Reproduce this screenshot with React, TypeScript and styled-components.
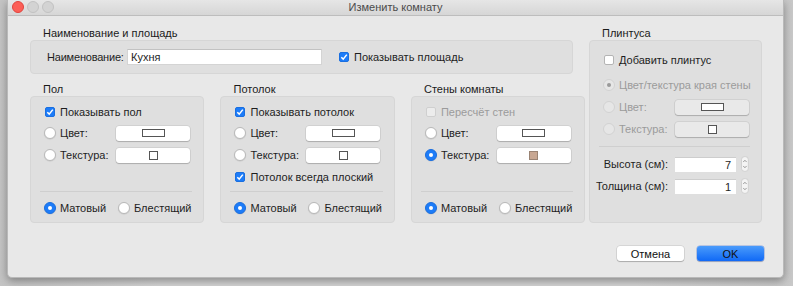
import React from 'react'
import styled, { createGlobalStyle, css } from 'styled-components'

const GlobalStyle = createGlobalStyle`
  html, body {
    margin: 0;
    padding: 0;
  }
  body {
    background: #cdcdcd;
    font-family: 'Liberation Sans', Arial, sans-serif;
    font-size: 11px;
    color: #1e1e1e;
  }
  * {
    box-sizing: border-box;
  }
`

const Blue = '#1d7cf8'

const Page = styled.div`
  width: 793px;
  height: 286px;
  padding-left: 7px;
  overflow: hidden;
  background: linear-gradient(to right, #c4c4c4, #d4d4d4 20%, #d4d4d4 80%, #c8c8c8);
`

const Window = styled.div`
  display: flex;
  flex-direction: column;
  width: 777px;
  height: 278px;
  background: #e8e8e8;
  border: 1px solid #b9b9b9;
  border-top: none;
  border-radius: 0 0 5px 5px;
  box-shadow: 0 3px 8px rgba(0, 0, 0, 0.35);
`

const TitleBar = styled.div`
  display: grid;
  grid-template-columns: 1fr auto 1fr;
  align-items: center;
  height: 16px;
  padding-bottom: 1px;
  background: linear-gradient(#e6e6e6, #d6d6d6);
  border-bottom: 1px solid #bdbdbd;
`

const Lights = styled.div`
  display: flex;
  gap: 3px;
  padding-left: 4px;
`

const Light = styled.span<{ $color?: string }>`
  width: 12px;
  height: 12px;
  border-radius: 50%;
  background: ${(p) => p.$color ?? '#d3d3d3'};
  border: 0.5px solid ${(p) => (p.$color ? '#e0443e' : '#c2c2c2')};
`

const WindowTitle = styled.div`
  color: #4b4b4b;
  font-size: 11px;
`

const Content = styled.div`
  display: grid;
  grid-template-columns: 543px 173px;
  column-gap: 16px;
  padding: 10px 0 0 22px;
`

const Column = styled.div`
  display: flex;
  flex-direction: column;
`

const Section = styled.section<{ $grow?: boolean }>`
  display: flex;
  flex-direction: column;
  ${(p) => p.$grow && 'flex: 1;'}
`

const SectionTitle = styled.div`
  height: 14px;
  line-height: 14px;
  padding-left: 13px;
  color: #1b1b1b;
`

const GroupBox = styled.div<{ $pad?: string }>`
  display: flex;
  flex-direction: column;
  flex: 1;
  gap: 6px;
  padding: ${(p) => p.$pad ?? '8px 12px 6px 13px'};
  background: #dfdfdf;
  border: 1px solid #d6d6d6;
  border-radius: 4px;
`

const NameBox = styled(GroupBox)`
  flex: none;
  flex-direction: row;
  align-items: center;
  gap: 0;
  height: 34px;
  padding: 0 16px;
`

const NameLabel = styled.span`
  width: 80px;
  flex: none;
  letter-spacing: -0.2px;
`

const TextInput = styled.input`
  width: 195px;
  height: 16px;
  padding: 0 3px;
  border: 1px solid #d4d4d4;
  border-top-color: #c2c2c2;
  background: #fff;
  font-family: inherit;
  font-size: 11px;
  color: #1e1e1e;
  outline: none;
`

const Walls = styled.div`
  display: grid;
  grid-template-columns: repeat(3, 1fr);
  column-gap: 16px;
  margin-top: 8px;
`

const Row = styled.div<{ $mt?: number; $h?: number }>`
  display: flex;
  align-items: center;
  height: ${(p) => p.$h ?? 16}px;
  flex: none;
  margin-top: ${(p) => p.$mt ?? 0}px;
`

const Choice = styled.label<{ $width?: number; $disabled?: boolean; $ml?: number }>`
  display: flex;
  align-items: center;
  gap: 4px;
  flex: none;
  white-space: nowrap;
  width: ${(p) => (p.$width ? `${p.$width}px` : 'auto')};
  margin-left: ${(p) => p.$ml ?? 0}px;
  color: ${(p) => (p.$disabled ? '#9b9b9b' : '#1e1e1e')};
`

const BoxMark = styled.span<{ $checked?: boolean; $disabled?: boolean }>`
  display: flex;
  align-items: center;
  justify-content: center;
  width: 10px;
  height: 10px;
  margin: 0 1px;
  border-radius: 2px;
  background: #fff;
  border: 1px solid #b4b4b4;
  ${(p) =>
    p.$checked &&
    css`
      background: ${Blue};
      border-color: #1a6fe0;
    `}
  ${(p) =>
    p.$disabled &&
    css`
      background: #ececec;
      border-color: #cfcfcf;
    `}
`

const RadioMark = styled.span<{ $checked?: boolean; $disabled?: boolean }>`
  display: flex;
  align-items: center;
  justify-content: center;
  width: 12px;
  height: 12px;
  border-radius: 50%;
  background: #fff;
  border: 1px solid #b9b9b9;
  box-shadow: 0 0.5px 1px rgba(0, 0, 0, 0.12);
  ${(p) =>
    p.$checked &&
    css`
      background: ${Blue};
      border-color: #1a6fe0;
      &::after {
        content: '';
        width: 4px;
        height: 4px;
        border-radius: 50%;
        background: #fff;
      }
    `}
  ${(p) =>
    p.$disabled &&
    css`
      background: #e6e6e6;
      border-color: #d2d2d2;
      box-shadow: none;
      &::after {
        background: #9a9a9a;
      }
    `}
`

const Check = () => (
  <svg width="8" height="8" viewBox="0 0 8 8">
    <path d="M1.3 4.2 L3.2 6.1 L6.8 1.6" fill="none" stroke="#fff" strokeWidth="1.5" />
  </svg>
)

const Checkbox = ({ checked, disabled, label, ml }: { checked?: boolean; disabled?: boolean; label: string; ml?: number }) => (
  <Choice $disabled={disabled} $ml={ml}>
    <BoxMark $checked={checked} $disabled={disabled}>{checked && <Check />}</BoxMark>
    {label}
  </Choice>
)

const Radio = ({ checked, disabled, label, width }: { checked?: boolean; disabled?: boolean; label: string; width?: number }) => (
  <Choice $disabled={disabled} $width={width}>
    <RadioMark $checked={checked} $disabled={disabled} />
    {label}
  </Choice>
)

const Well = styled.div<{ $disabled?: boolean }>`
  display: flex;
  align-items: center;
  justify-content: center;
  flex: 1;
  max-width: 74px;
  height: 15px;
  border-radius: 3px;
  background: ${(p) => (p.$disabled ? '#e9e9e9' : '#fff')};
  box-shadow: 0 0 0 0.5px rgba(0, 0, 0, 0.12), 0 1px 1px rgba(0, 0, 0, 0.18);
`

const Swatch = styled.span<{ $kind: 'color' | 'texture'; $fill?: string }>`
  width: ${(p) => (p.$kind === 'color' ? 23 : 9)}px;
  height: ${(p) => (p.$kind === 'color' ? 8 : 9)}px;
  background: ${(p) => p.$fill ?? '#fff'};
  border: 1px solid ${(p) => (p.$fill ? '#9a8373' : '#555')};
`

const Separator = styled.div<{ $mt?: string; $mb?: number }>`
  height: 1px;
  flex: none;
  margin: ${(p) => p.$mt ?? 'auto'} -1px ${(p) => p.$mb ?? 2}px -4px;
  background: #cfcfcf;
`

const FinishRow = ({ first }: { first: boolean }) => (
  <Row>
    <Radio checked={first} label="Матовый" width={74} />
    <Radio checked={!first} label="Блестящий" />
  </Row>
)

const SurfaceBox = ({
  title,
  top,
  textured,
  extra,
}: {
  title: string
  top: React.ReactNode
  textured?: boolean
  extra?: React.ReactNode
}) => (
  <Section>
    <SectionTitle>{title}</SectionTitle>
    <GroupBox>
      <Row $h={14}>{top}</Row>
      <Row>
        <Radio label="Цвет:" width={72} />
        <Well>
          <Swatch $kind="color" />
        </Well>
      </Row>
      <Row>
        <Radio label="Текстура:" width={72} checked={textured} />
        <Well>
          <Swatch $kind="texture" $fill={textured ? '#c8a792' : undefined} />
        </Well>
      </Row>
      {extra}
      <Separator />
      <FinishRow first />
    </GroupBox>
  </Section>
)

const NumberLabel = styled.span`
  display: flex;
  justify-content: flex-end;
  width: 72px;
  padding-right: 7px;
  white-space: nowrap;
  flex: none;
`

const NumberInput = styled.div`
  width: 62px;
  height: 15px;
  padding: 0 5px;
  line-height: 15px;
  text-align: right;
  background: #fff;
  border-top: 1px solid #cdcdcd;
`

const Stepper = () => (
  <svg width="8" height="16" viewBox="0 0 8 16" style={{ marginLeft: 5 }}>
    <rect x="0.5" y="0.5" width="7" height="15" rx="3" fill="#f4f4f4" stroke="#cfcfcf" />
    <path d="M2.3 6 L4 4.2 L5.7 6" fill="none" stroke="#8c8c8c" strokeWidth="0.9" />
    <path d="M2.3 10 L4 11.8 L5.7 10" fill="none" stroke="#8c8c8c" strokeWidth="0.9" />
  </svg>
)

const NumberRow = ({ label, value, mt }: { label: string; value: string; mt?: number }) => (
  <Row $mt={mt}>
    <NumberLabel>{label}</NumberLabel>
    <NumberInput>{value}</NumberInput>
    <Stepper />
  </Row>
)

const Footer = styled.div`
  display: flex;
  justify-content: flex-end;
  gap: 13px;
  margin-top: auto;
  padding: 0 19px 16px 0;
`

const Button = styled.button<{ $primary?: boolean }>`
  width: 67px;
  height: 15px;
  padding: 0;
  border: none;
  border-radius: 3px;
  font-family: inherit;
  font-size: 11px;
  color: #111;
  background: #fff;
  box-shadow: 0 0 0 0.5px rgba(0, 0, 0, 0.15), 0 1px 1px rgba(0, 0, 0, 0.2);
  ${(p) =>
    p.$primary &&
    css`
      background: linear-gradient(#4a9bfb, #1069f6);
      box-shadow: 0 0 0 0.5px rgba(0, 60, 200, 0.4), 0 1px 1px rgba(0, 0, 0, 0.2);
    `}
`

export default function App() {
  return (
    <Page>
      <GlobalStyle />
      <Window>
        <TitleBar>
          <Lights>
            <Light $color="#fc5f57" />
            <Light />
            <Light />
          </Lights>
          <WindowTitle>Изменить комнату</WindowTitle>
          <span />
        </TitleBar>
        <Content>
          <Column>
            <Section>
              <SectionTitle>Наименование и площадь</SectionTitle>
              <NameBox>
                <NameLabel>Наименование:</NameLabel>
                <TextInput readOnly value="Кухня" />
                <Checkbox checked label="Показывать площадь" ml={16} />
              </NameBox>
            </Section>
            <Walls>
              <SurfaceBox title="Пол" top={<Checkbox checked label="Показывать пол" />} />
              <SurfaceBox
                title="Потолок"
                top={<Checkbox checked label="Показывать потолок" />}
                extra={
                  <Row>
                    <Checkbox checked label="Потолок всегда плоский" />
                  </Row>
                }
              />
              <SurfaceBox title="Стены комнаты" top={<Checkbox disabled label="Пересчёт стен" />} textured />
            </Walls>
          </Column>
          <Section $grow>
            <SectionTitle>Плинтуса</SectionTitle>
            <GroupBox $pad="11px 12px 6px 13px">
              <Row>
                <Checkbox label="Добавить плинтус" />
              </Row>
              <Row $mt={3}>
                <Radio checked disabled label="Цвет/текстура края стены" />
              </Row>
              <Row>
                <Radio disabled label="Цвет:" width={72} />
                <Well $disabled>
                  <Swatch $kind="color" />
                </Well>
              </Row>
              <Row>
                <Radio disabled label="Текстура:" width={72} />
                <Well $disabled>
                  <Swatch $kind="texture" />
                </Well>
              </Row>
              <Separator $mt="3px" $mb={3} />
              <NumberRow label="Высота (см):" value="7" />
              <NumberRow label="Толщина (см):" value="1" />
            </GroupBox>
          </Section>
        </Content>
        <Footer>
          <Button>Отмена</Button>
          <Button $primary>OK</Button>
        </Footer>
      </Window>
    </Page>
  )
}
